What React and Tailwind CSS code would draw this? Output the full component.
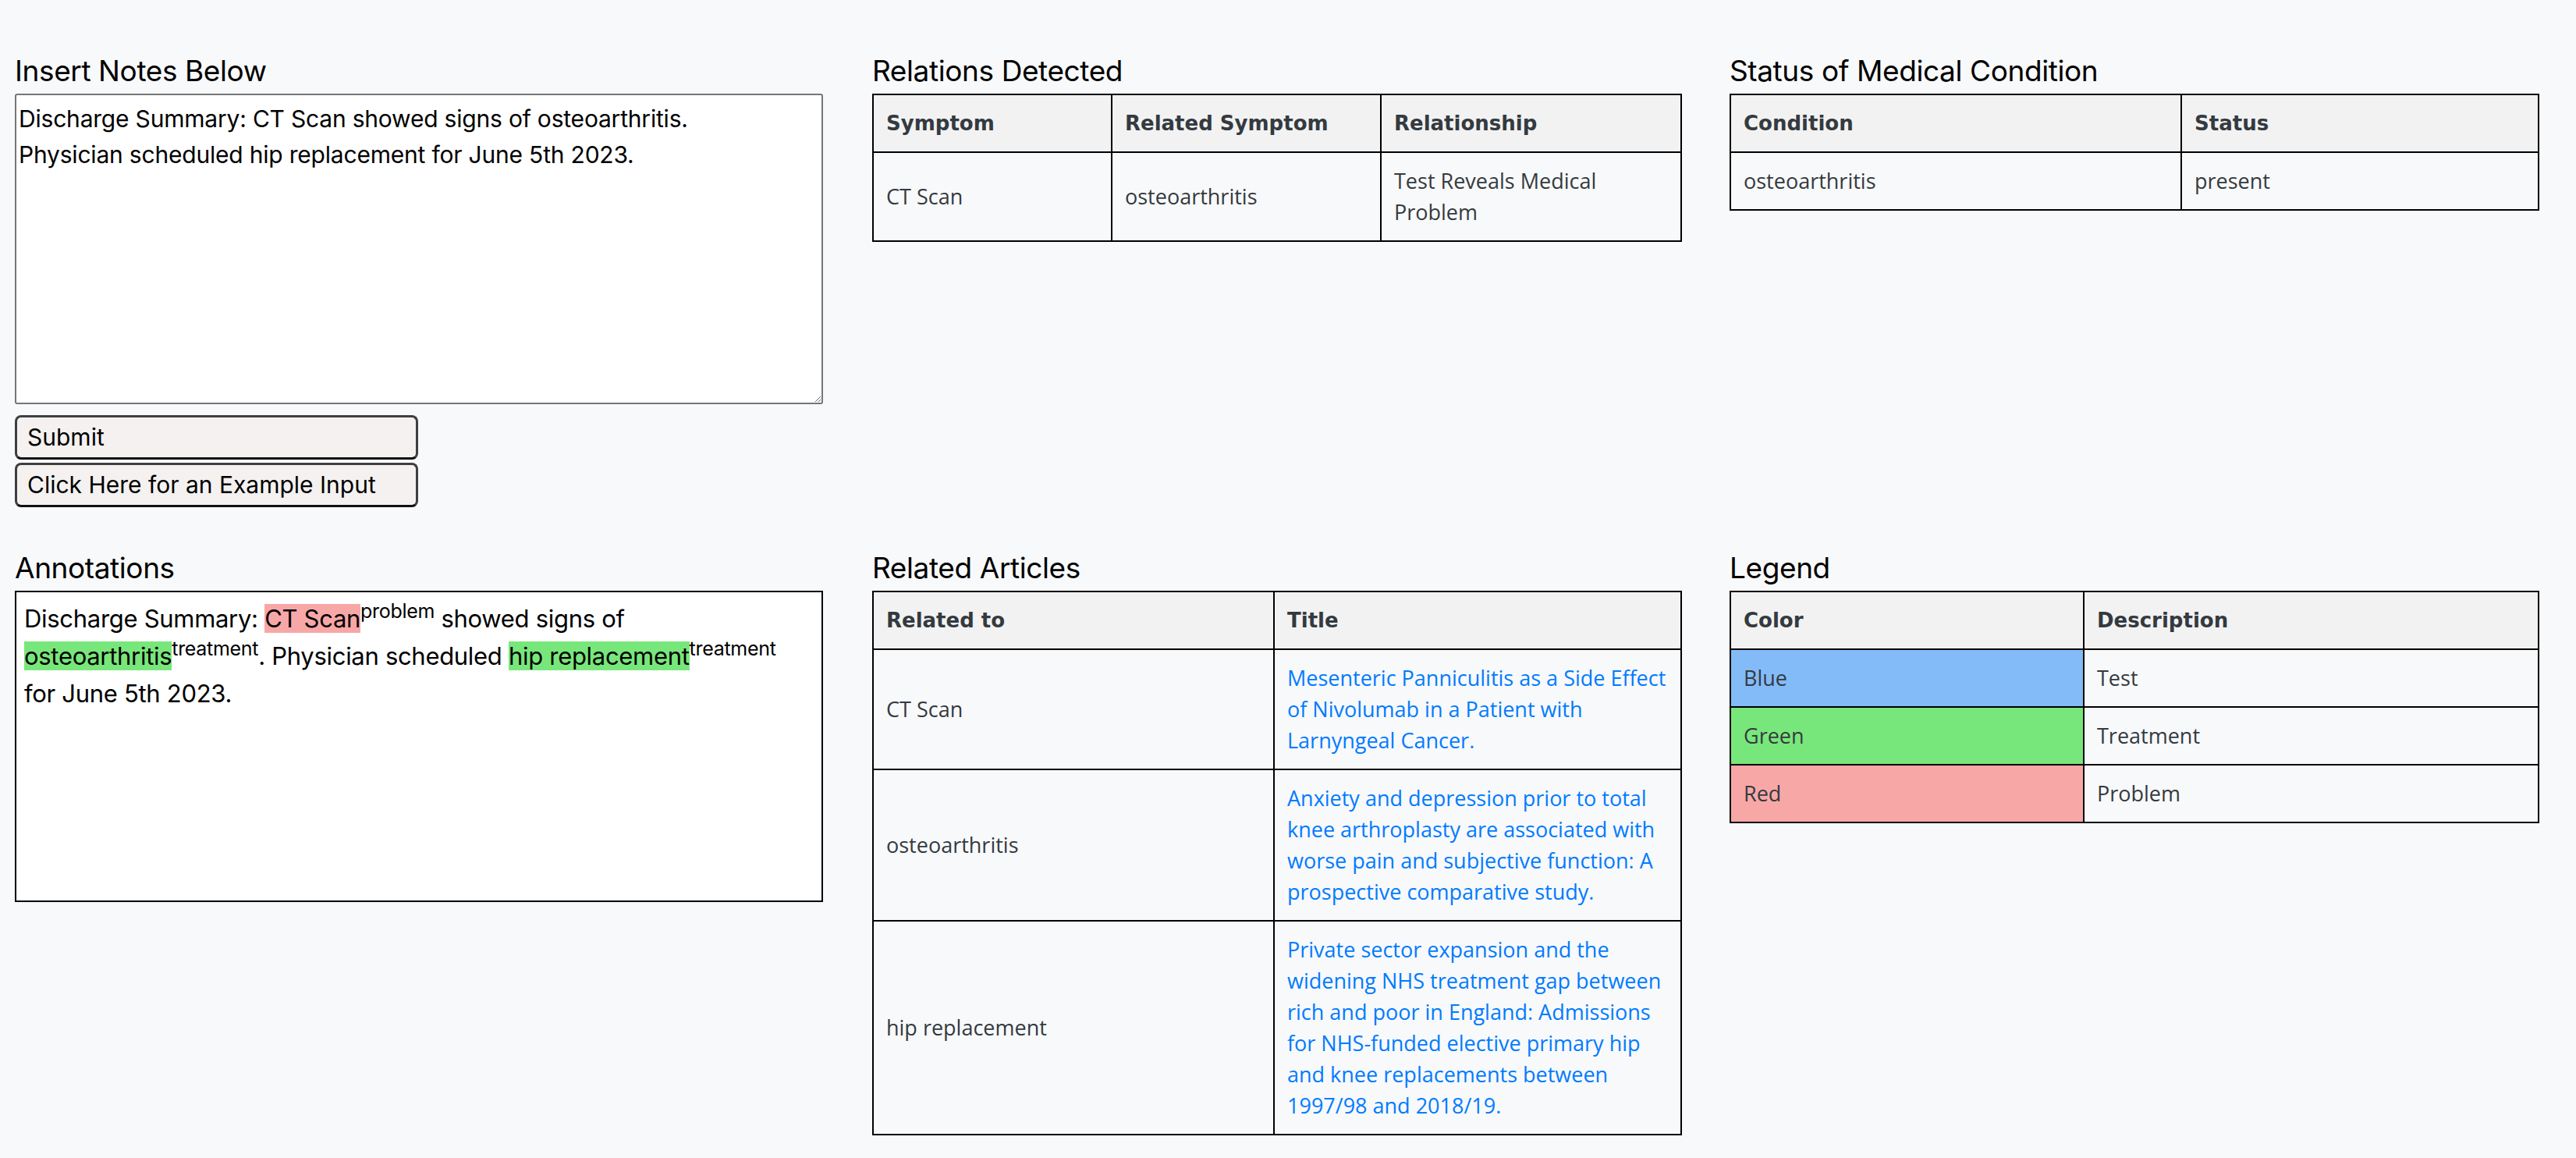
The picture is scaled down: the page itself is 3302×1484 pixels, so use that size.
import { useState } from "react";

const SAMPLE =
    "Discharge Summary: CT Scan showed signs of osteoarthritis.\nPhysician scheduled hip replacement for June 5th 2023.";

const relations = [
    {
        symptom: "CT Scan",
        related: "osteoarthritis",
        relationship: "Test Reveals Medical Problem",
    },
];

const statuses = [{ condition: "osteoarthritis", status: "present" }];

const articles = [
    {
        relatedTo: "CT Scan",
        title: "Mesenteric Panniculitis as a Side Effect of Nivolumab in a Patient with Larnyngeal Cancer.",
    },
    {
        relatedTo: "osteoarthritis",
        title: "Anxiety and depression prior to total knee arthroplasty are associated with worse pain and subjective function: A prospective comparative study.",
    },
    {
        relatedTo: "hip replacement",
        title: "Private sector expansion and the widening NHS treatment gap between rich and poor in England: Admissions for NHS-funded elective primary hip and knee replacements between 1997/98 and 2018/19.",
    },
];

const legend = [
    { color: "Blue", description: "Test", bg: "bg-[#83bbf9]" },
    { color: "Green", description: "Treatment", bg: "bg-[#78e77b]" },
    { color: "Red", description: "Problem", bg: "bg-[#f8a7a7]" },
];

const thClass =
    "border-2 border-black bg-[#f2f2f2] px-4 py-4 text-left align-middle font-['DejaVu_Sans',sans-serif] text-[26px] font-bold leading-[40px] text-[#343a40]";
const tdClass =
    "border-2 border-black px-4 py-4 text-left align-middle font-['Open_Sans',sans-serif] text-[27px] leading-[40px] text-[#343a40]";
const buttonClass =
    "h-[57px] w-[517px] rounded-[8px] border-[3px] border-[#3f3f3f] border-b-[#111] bg-[#f4f1f0] pl-[13px] text-left font-['Inter',sans-serif] text-[30px] text-black";

function Heading({ children }) {
    return (
        <h2 className="mb-[7px] h-[44px] font-['Inter',sans-serif] text-[37px] font-normal leading-[44px] tracking-[-0.4px] text-black">
            {children}
        </h2>
    );
}

function Mark({ children, label, bg }) {
    return (
        <>
            <span className={bg}>{children}</span>
            <sup className="text-[25px]">{label}</sup>
        </>
    );
}

export default function App() {
    const [notes, setNotes] = useState(SAMPLE);

    return (
        <div className="min-h-screen bg-[#f8f9fa] pl-[19px] pt-[69px]">
            <div className="grid grid-cols-[1036px_1036px_1036px] gap-x-[63px] gap-y-[56px]">
                {/* notes input */}
                <section>
                    <Heading>Insert Notes Below</Heading>
                    <textarea
                        value={notes}
                        onChange={(e) => setNotes(e.target.value)}
                        className="block h-[398px] w-[1036px] rounded-[3px] border-2 border-[#767676] bg-white pl-[3px] pt-[7px] font-['Inter',sans-serif] text-[30px] leading-[46px] tracking-[-0.2px] text-black outline-none"
                    />
                    <div className="mt-[14px] flex flex-col gap-[4px]">
                        <button className={buttonClass}>Submit</button>
                        <button
                            onClick={() => setNotes(SAMPLE)}
                            className={buttonClass}
                        >
                            Click Here for an Example Input
                        </button>
                    </div>
                </section>

                {/* relations */}
                <section>
                    <Heading>Relations Detected</Heading>
                    <table className="w-[1036px] table-fixed border-collapse border-2 border-black">
                        <colgroup>
                            <col className="w-[306px]" />
                            <col className="w-[345px]" />
                            <col className="w-[385px]" />
                        </colgroup>
                        <thead>
                            <tr>
                                <th className={thClass}>Symptom</th>
                                <th className={thClass}>Related Symptom</th>
                                <th className={thClass}>Relationship</th>
                            </tr>
                        </thead>
                        <tbody>
                            {relations.map((r) => (
                                <tr key={r.symptom}>
                                    <td className={tdClass}>{r.symptom}</td>
                                    <td className={tdClass}>{r.related}</td>
                                    <td className={tdClass}>{r.relationship}</td>
                                </tr>
                            ))}
                        </tbody>
                    </table>
                </section>

                {/* status */}
                <section>
                    <Heading>Status of Medical Condition</Heading>
                    <table className="w-[1036px] table-fixed border-collapse border-2 border-black">
                        <colgroup>
                            <col className="w-[578px]" />
                            <col className="w-[458px]" />
                        </colgroup>
                        <thead>
                            <tr>
                                <th className={thClass}>Condition</th>
                                <th className={thClass}>Status</th>
                            </tr>
                        </thead>
                        <tbody>
                            {statuses.map((s) => (
                                <tr key={s.condition}>
                                    <td className={tdClass}>{s.condition}</td>
                                    <td className={tdClass}>{s.status}</td>
                                </tr>
                            ))}
                        </tbody>
                    </table>
                </section>

                {/* annotations */}
                <section>
                    <Heading>Annotations</Heading>
                    <div className="h-[399px] w-[1036px] border-2 border-black bg-white pl-[10px] pr-[26px] pt-[10px] font-['Inter',sans-serif] text-[31px] leading-[48px] tracking-[-0.3px] text-black">
                        Discharge Summary:{" "}
                        <Mark label="problem" bg="bg-[#f8a7a7]">
                            CT Scan
                        </Mark>{" "}
                        showed signs of{" "}
                        <Mark label="treatment" bg="bg-[#78e77b]">
                            osteoarthritis
                        </Mark>
                        . Physician scheduled{" "}
                        <Mark label="treatment" bg="bg-[#78e77b]">
                            hip replacement
                        </Mark>{" "}
                        for June 5th 2023.
                    </div>
                </section>

                {/* articles */}
                <section>
                    <Heading>Related Articles</Heading>
                    <table className="w-[1036px] table-fixed border-collapse border-2 border-black">
                        <colgroup>
                            <col className="w-[514px]" />
                            <col className="w-[522px]" />
                        </colgroup>
                        <thead>
                            <tr>
                                <th className={thClass}>Related to</th>
                                <th className={thClass}>Title</th>
                            </tr>
                        </thead>
                        <tbody>
                            {articles.map((a) => (
                                <tr key={a.relatedTo}>
                                    <td className={tdClass}>{a.relatedTo}</td>
                                    <td className={tdClass}>
                                        <a
                                            href="#"
                                            className="text-[#007bff] no-underline"
                                        >
                                            {a.title}
                                        </a>
                                    </td>
                                </tr>
                            ))}
                        </tbody>
                    </table>
                </section>

                {/* legend */}
                <section>
                    <Heading>Legend</Heading>
                    <table className="w-[1036px] table-fixed border-collapse border-2 border-black">
                        <colgroup>
                            <col className="w-[453px]" />
                            <col className="w-[583px]" />
                        </colgroup>
                        <thead>
                            <tr>
                                <th className={thClass}>Color</th>
                                <th className={thClass}>Description</th>
                            </tr>
                        </thead>
                        <tbody>
                            {legend.map((l) => (
                                <tr key={l.color}>
                                    <td className={`${tdClass} ${l.bg}`}>
                                        {l.color}
                                    </td>
                                    <td className={tdClass}>{l.description}</td>
                                </tr>
                            ))}
                        </tbody>
                    </table>
                </section>
            </div>
        </div>
    );
}
